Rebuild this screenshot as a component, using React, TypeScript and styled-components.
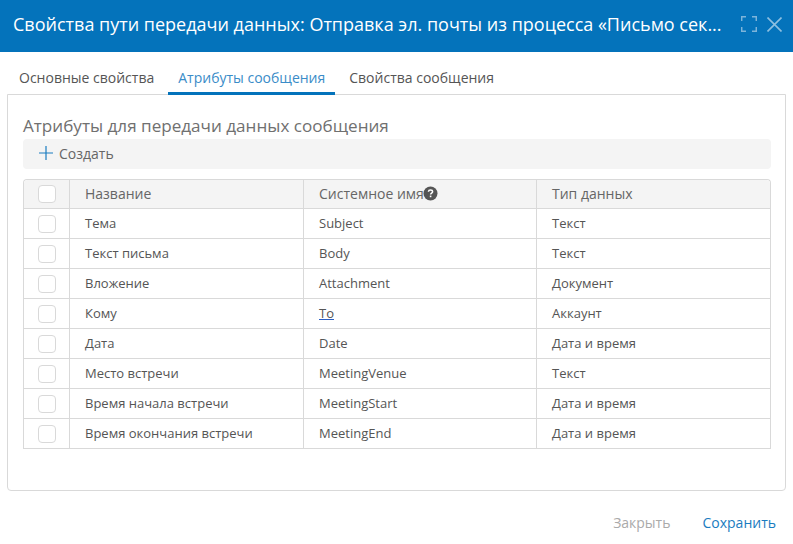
import React from "react";
import styled, { createGlobalStyle } from "styled-components";

const Global = createGlobalStyle`
  html, body { margin: 0; padding: 0; background: #fff; }
  body { font-family: "Open Sans", "Liberation Sans", sans-serif; color: #555; }
  * { box-sizing: border-box; }
`;

const Dialog = styled.div`
  width: 793px;
  height: 544px;
  display: flex;
  flex-direction: column;
  overflow: hidden;
`;

const Header = styled.header`
  height: 52px;
  flex: none;
  background: #0473bb;
  display: flex;
  align-items: center;
  padding: 0 11px 4px 13px;
`;

const Title = styled.h1`
  margin: 0;
  flex: 1;
  min-width: 0;
  font-size: 18px;
  font-weight: 400;
  line-height: 48px;
  color: #fff;
  white-space: nowrap;
`;

const HeaderIcons = styled.div`
  display: flex;
  align-items: center;
  gap: 10px;
  margin-left: 19px;
`;

const Tabs = styled.nav`
  height: 42px;
  flex: none;
  display: flex;
  align-items: flex-end;
  padding-left: 9px;
`;

const Tab = styled.div<{ $active?: boolean }>`
  height: 34px;
  padding: 7px 10px 0;
  font-size: 14px;
  line-height: 20px;
  margin-right: 4px;
  color: ${(p) => (p.$active ? "#3a8cc8" : "#555")};
  border-bottom: 3px solid ${(p) => (p.$active ? "#0473bb" : "transparent")};
  position: relative;
  top: 1px;
`;

const Panel = styled.section`
  flex: none;
  height: 397px;
  margin: 0 7px;
  border: 1px solid #d9d9d9;
  border-radius: 0 0 4px 4px;
  padding: 18px 14px 0 15px;
`;

const SectionTitle = styled.h2`
  margin: 0;
  font-size: 17.1px;
  font-weight: 400;
  line-height: 26px;
  color: #707070;
`;

const Toolbar = styled.div`
  height: 30px;
  background: #f4f4f4;
  border-radius: 4px;
  display: flex;
  align-items: center;
  gap: 6px;
  padding: 0 0 2px 16px;
  font-size: 14px;
  color: #666;
  margin-bottom: 10px;
`;

const Table = styled.table`
  width: 748px;
  border-collapse: separate;
  border-spacing: 0;
  table-layout: fixed;
  border: 1px solid #d9d9d9;
  border-bottom: none;
  border-radius: 4px 4px 0 0;
  font-size: 13px;
`;

const Th = styled.th`
  height: 29px;
  padding: 0 0 2px 15px;
  background: #f4f4f4;
  font-size: 14px;
  font-weight: 400;
  text-align: left;
  color: #666;
  border-bottom: 1px solid #d9d9d9;
  border-left: 1px solid #d9d9d9;
  &:first-child { border-left: none; padding: 0; border-top-left-radius: 4px; }
  &:last-child { border-top-right-radius: 4px; }
`;

const Td = styled.td`
  height: 30px;
  padding: 0 0 2px 15px;
  color: #555;
  border-bottom: 1px solid #d9d9d9;
  border-left: 1px solid #d9d9d9;
  white-space: nowrap;
  &:first-child { border-left: none; padding: 0; }
`;

const Check = styled.div`
  width: 18px;
  height: 18px;
  margin: 0 auto;
  background: #fff;
  border: 1px solid #d9d9d9;
  border-radius: 4px;
`;

const NameWithHelp = styled.span`
  display: inline-flex;
  align-items: center;
`;

const HelpIcon = styled.svg`
  margin-left: -1px;
`;

const Underlined = styled.span`
  text-decoration: underline;
  text-decoration-color: #2b5fc4;
`;

const Footer = styled.footer`
  flex: 1;
  display: flex;
  justify-content: flex-end;
  align-items: flex-start;
  gap: 32px;
  padding: 22px 17px 0 0;
  font-size: 14px;
  line-height: 20px;
`;

const FooterButton = styled.div<{ $primary?: boolean }>`
  color: ${(p) => (p.$primary ? "#1a7cc0" : "#aaa")};
`;

const rows = [
  ["Тема", "Subject", "Текст"],
  ["Текст письма", "Body", "Текст"],
  ["Вложение", "Attachment", "Документ"],
  ["Кому", "To", "Аккаунт"],
  ["Дата", "Date", "Дата и время"],
  ["Место встречи", "MeetingVenue", "Текст"],
  ["Время начала встречи", "MeetingStart", "Дата и время"],
  ["Время окончания встречи", "MeetingEnd", "Дата и время"],
];

export default function App() {
  return (
    <Dialog>
      <Global />
      <Header>
        <Title>Свойства пути передачи данных: Отправка эл. почты из процесса «Письмо сек...</Title>
        <HeaderIcons>
          <svg width="16" height="16" viewBox="0 0 16 16" fill="none" stroke="#7db4da" strokeWidth="1.5">
            <path d="M.7 5V.7H5M11 .7H15.3V5M15.3 11V15.3H11M5 15.3H.7V11" />
          </svg>
          <svg width="15" height="15" viewBox="0 0 15 15" fill="none" stroke="#8dbfe0" strokeWidth="1.6">
            <path d="M.5 .5L14.5 14.5M14.5 .5L.5 14.5" />
          </svg>
        </HeaderIcons>
      </Header>
      <Tabs>
        <Tab>Основные свойства</Tab>
        <Tab $active>Атрибуты сообщения</Tab>
        <Tab>Свойства сообщения</Tab>
      </Tabs>
      <Panel>
        <SectionTitle>Атрибуты для передачи данных сообщения</SectionTitle>
        <Toolbar>
          <svg width="14" height="14" viewBox="0 0 14 14" fill="none" stroke="#1a7cc0" strokeWidth="1.2">
            <path d="M7 0V14M0 7H14" />
          </svg>
          Создать
        </Toolbar>
        <Table>
          <colgroup>
            <col style={{ width: 45 }} />
            <col style={{ width: 234 }} />
            <col style={{ width: 233 }} />
            <col />
          </colgroup>
          <thead>
            <tr>
              <Th><Check /></Th>
              <Th>Название</Th>
              <Th>
                <NameWithHelp>
                  Системное имя
                  <HelpIcon width="15" height="15" viewBox="0 0 15 15">
                    <circle cx="7.5" cy="7.5" r="7" fill="#555" />
                    <path d="M5.4 5.8C5.5 4.6 6.4 4 7.5 4C8.7 4 9.6 4.7 9.6 5.7C9.6 7.1 7.6 7.1 7.6 8.6" fill="none" stroke="#fff" strokeWidth="1.5" />
                    <rect x="6.8" y="9.6" width="1.6" height="1.6" fill="#fff" />
                  </HelpIcon>
                </NameWithHelp>
              </Th>
              <Th>Тип данных</Th>
            </tr>
          </thead>
          <tbody>
            {rows.map(([name, sys, type]) => (
              <tr key={sys}>
                <Td><Check /></Td>
                <Td>{name}</Td>
                <Td>{sys === "To" ? <Underlined>{sys}</Underlined> : sys}</Td>
                <Td>{type}</Td>
              </tr>
            ))}
          </tbody>
        </Table>
      </Panel>
      <Footer>
        <FooterButton>Закрыть</FooterButton>
        <FooterButton $primary>Сохранить</FooterButton>
      </Footer>
    </Dialog>
  );
}
